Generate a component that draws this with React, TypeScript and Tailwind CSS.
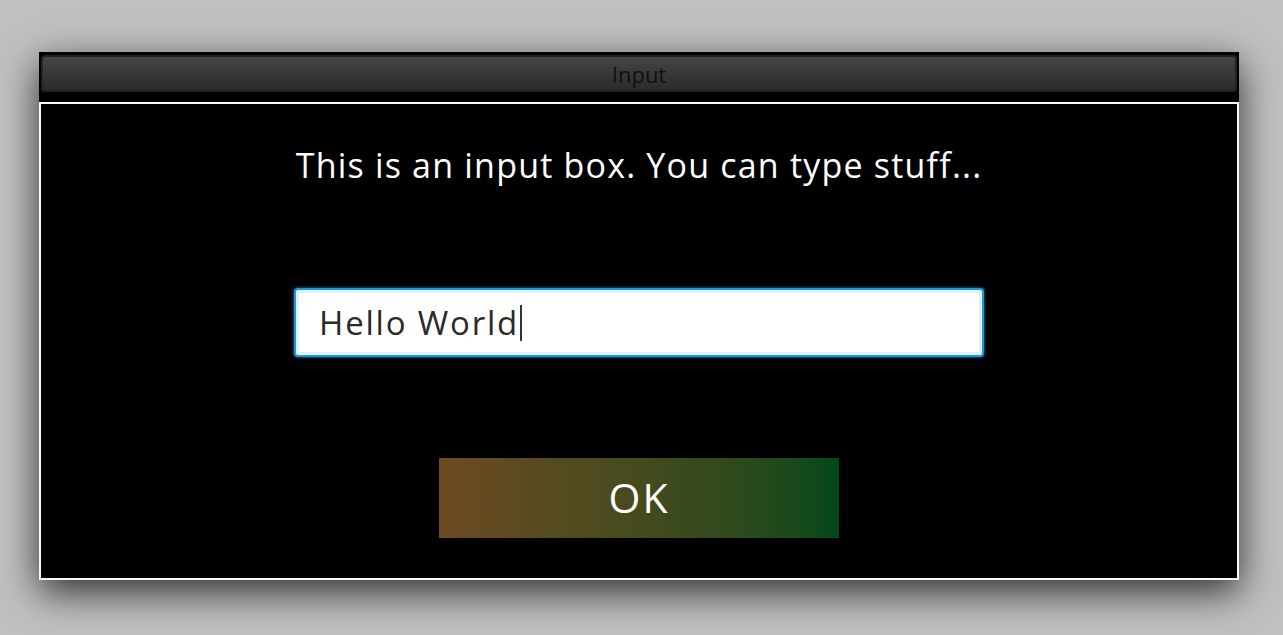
import React from 'react';

export default function App() {
  const value = 'Hello World';

  return (
    <div className="min-h-screen w-full bg-[#c0c0be] pt-[52px] font-['Open_Sans',sans-serif]">
      <div className="ml-[39px] w-[1200px] shadow-[0_12px_36px_rgba(0,0,0,0.75)]">
        {/* Title bar */}
        <div className="h-[50px] bg-black px-[2px] pt-[3px]">
          <div className="flex h-[37px] items-center justify-center rounded-[4px] border-2 border-[#222] bg-gradient-to-b from-[#454545] to-[#2b2b2b]">
            <span className="text-[22px] leading-none text-[#101010]">Input</span>
          </div>
        </div>

        {/* Body */}
        <div className="flex h-[478px] flex-col items-center border-2 border-[#f2fbfd] bg-black pt-[40px]">
          <p className="text-[34px] leading-[42px] tracking-[1.2px] text-white">This is an input box. You can type stuff...</p>

          <div className="mt-[102px] flex h-[69px] w-[690px] items-center rounded-[4px] border-2 border-[#1d9ad6] bg-white pl-[23px] shadow-[inset_0_0_0_3px_#dff1f9,0_0_3px_#1d9ad6]">
            <span className="text-[33px] leading-none tracking-[1.8px] text-[#2a2a2a]">{value}</span>
            <span className="ml-[1px] h-[36px] w-[2px] bg-[#333]" />
          </div>

          <button className="mt-[101px] flex h-[80px] w-[400px] items-center justify-center bg-gradient-to-r from-[#6c4a22] to-[#00481a] text-[41px] tracking-[2px] text-white">
            OK
          </button>
        </div>
      </div>
    </div>
  );
}
